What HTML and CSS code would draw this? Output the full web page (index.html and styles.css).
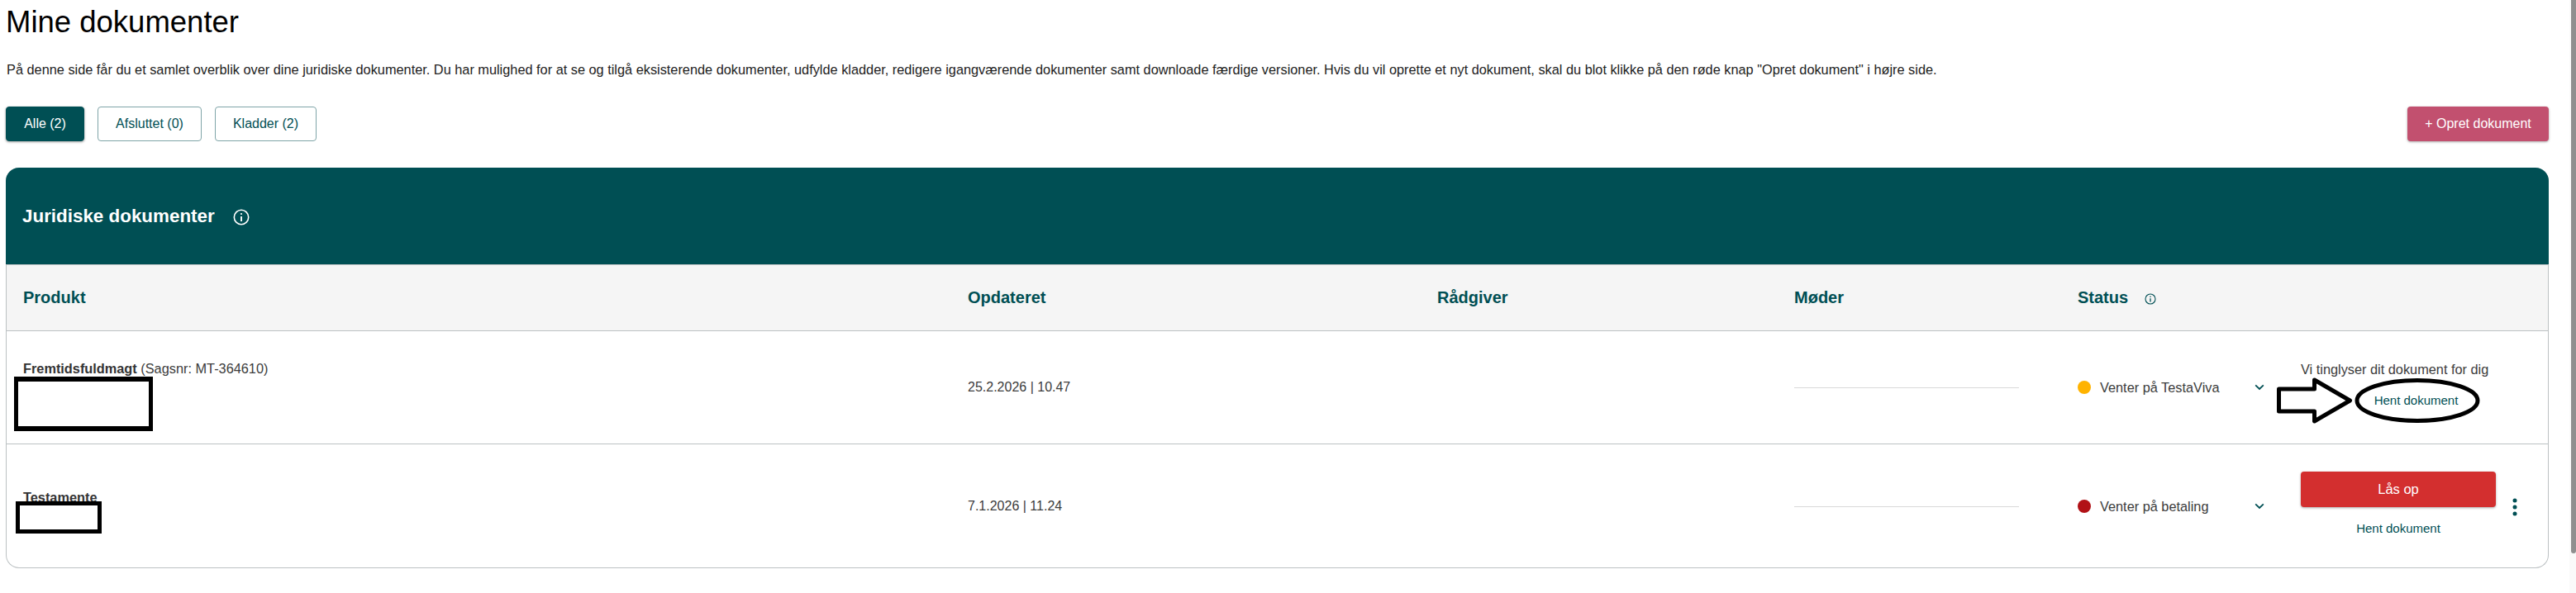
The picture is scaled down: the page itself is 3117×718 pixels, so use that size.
FILE: index.html
```html
<!DOCTYPE html>
<html lang="da">
<head>
    <meta charset="UTF-8">
    <meta name="viewport" content="width=device-width, initial-scale=1.0">
    <title>Mine dokumenter</title>
    <link rel="stylesheet" href="styles.css">
</head>
<body>
    <main class="page">
        <h1>Mine dokumenter</h1>
        <p class="intro">På denne side får du et samlet overblik over dine juridiske dokumenter. Du har mulighed for at se og tilgå eksisterende dokumenter, udfylde kladder, redigere igangværende dokumenter samt downloade færdige versioner. Hvis du vil oprette et nyt dokument, skal du blot klikke på den røde knap "Opret dokument" i højre side.</p>

        <div class="toolbar">
            <button class="filter filter-active">Alle (2)</button>
            <button class="filter filter-afsluttet">Afsluttet (0)</button>
            <button class="filter filter-kladder">Kladder (2)</button>
            <button class="create">+ Opret dokument</button>
        </div>

        <section class="panel">
            <div class="panel-head">
                <h2>Juridiske dokumenter</h2>
                <svg class="info-icon" viewBox="0 0 20 20" fill="none" stroke="currentColor" stroke-width="1.6">
                    <circle cx="10" cy="10" r="8.7"/>
                    <path d="M10 9v6" stroke-width="1.9"/>
                    <circle cx="10" cy="6" r="1.1" fill="currentColor" stroke="none"/>
                </svg>
            </div>

            <div class="row row-head">
                <div class="cell">Produkt</div>
                <div class="cell">Opdateret</div>
                <div class="cell">Rådgiver</div>
                <div class="cell">Møder</div>
                <div class="cell status-head">
                    Status
                    <svg class="info-small" viewBox="0 0 14 14" fill="none" stroke="currentColor" stroke-width="1.1">
                        <circle cx="7" cy="7" r="6"/>
                        <path d="M7 6.2v4.2" stroke-width="1.3"/>
                        <circle cx="7" cy="4.2" r=".8" fill="currentColor" stroke="none"/>
                    </svg>
                </div>
                <div class="cell"></div>
            </div>

            <div class="row row-first">
                <div class="cell product product-first">
                    <div><b>Fremtidsfuldmagt</b> (Sagsnr: MT-364610)</div>
                    <div class="redact redact-first"></div>
                </div>
                <div class="cell date">25.2.2026 | 10.47</div>
                <div class="cell"></div>
                <div class="cell"><div class="meeting-line"></div></div>
                <div class="cell status">
                    <span class="dot dot-yellow"></span>
                    <span class="status-text">Venter på TestaViva</span>
                    <svg class="chevron" viewBox="0 0 12 8" fill="none" stroke="currentColor" stroke-width="1.8"><path d="M1.2 1.4 6 6l4.8-4.6"/></svg>
                </div>
                <div class="cell action action-first">
                    <div class="action-note">Vi tinglyser dit dokument for dig</div>
                    <a class="link link-first">Hent dokument</a>
                    <!-- markering lagt oven paa skaermbilledet -->
                    <svg class="marking" viewBox="0 0 250 58" fill="none" stroke="#000" stroke-width="5">
                        <path d="M2.500 15h43V4l43 25-43 25V42h-43z" stroke-linejoin="round"/>
                        <ellipse cx="170" cy="29" rx="73" ry="24.500"/>
                    </svg>
                </div>
            </div>

            <div class="row row-last">
                <div class="cell product product-last">
                    <div><b>Testamente</b></div>
                    <div class="redact redact-last"></div>
                </div>
                <div class="cell date">7.1.2026 | 11.24</div>
                <div class="cell"></div>
                <div class="cell"><div class="meeting-line"></div></div>
                <div class="cell status">
                    <span class="dot dot-red"></span>
                    <span class="status-text">Venter på betaling</span>
                    <svg class="chevron" viewBox="0 0 12 8" fill="none" stroke="currentColor" stroke-width="1.8"><path d="M1.2 1.4 6 6l4.8-4.6"/></svg>
                </div>
                <div class="cell action action-last">
                    <div class="action-stack">
                        <button class="unlock">Lås op</button>
                        <a class="link">Hent dokument</a>
                    </div>
                    <svg class="kebab" viewBox="0 0 6 24" fill="currentColor">
                        <circle cx="3" cy="4" r="2.500"/>
                        <circle cx="3" cy="12" r="2.500"/>
                        <circle cx="3" cy="20" r="2.500"/>
                    </svg>
                </div>
            </div>
        </section>
    </main>
    <div class="scrollbar"><div class="scrollbar-thumb"></div></div>
</body>
</html>
```

FILE: styles.css
```css
* {
    box-sizing: border-box;
}
html, body {
    height: 718px;
    overflow: hidden;
}
body {
    margin: 0;
    display: flex;
    background-color: #fff;
    color: #3c3c3c;
    font-family: "Liberation Sans", Arial, sans-serif;
}
.page {
    width: 3077px;
    margin-left: 7px;
    flex-shrink: 0;
}
h1 {
    margin: 0;
    padding-top: 6px;
    height: 62px;
    font-size: 36.5px;
    line-height: 42px;
    font-weight: 400;
    color: #000;
}
.intro {
    margin: 0;
    height: 67px;
    padding-left: 1px;
    padding-top: 13px;
    font-size: 16.32px;
    line-height: 18px;
    color: #222;
    white-space: nowrap;
}
.toolbar {
    display: flex;
    height: 74px;
    align-items: flex-start;
}
button {
    font-family: inherit;
    cursor: pointer;
}
.filter {
    height: 42px;
    margin-right: 16px;
    border: 1px solid #7fa5a8;
    border-radius: 4px;
    background-color: #fff;
    color: #004f54;
    font-size: 16px;
}
.filter-active {
    width: 95px;
    background-color: #004f54;
    border-color: #004f54;
    color: #fff;
    box-shadow: 0 1px 3px rgba(0, 0, 0, 0.4);
}
.filter-afsluttet {
    width: 126px;
}
.filter-kladder {
    width: 123px;
}
.create {
    width: 171px;
    height: 42px;
    margin-left: auto;
    border: none;
    border-radius: 4px;
    background-color: #c2506f;
    color: #fff;
    font-size: 16px;
    box-shadow: 0 1px 3px rgba(0, 0, 0, 0.35);
}
.panel {
    width: 3077px;
    height: 485px;
    border: 1px solid #bcc1c3;
    border-top: none;
    border-radius: 16px;
}
.panel-head {
    display: flex;
    align-items: center;
    height: 117px;
    margin: 0 -1px;
    padding-left: 20px;
    border-radius: 16px 16px 0 0;
    background-color: #004f54;
    color: #fff;
}
.panel-head h2 {
    margin: 0;
    font-size: 22.4px;
    font-weight: 700;
}
.info-icon {
    width: 20px;
    height: 20px;
    margin-left: 22px;
    margin-top: 3px;
}
.row {
    display: grid;
    grid-template-columns: 1143px 568px 432px 343px 270px 1fr;
    align-items: center;
    border-bottom: 1px solid #bcc1c3;
    font-size: 16.32px;
}
.row-head {
    height: 81px;
    padding-left: 20px;
    background-color: #f5f5f5;
    border-top: 1px solid #c2c6c8;
    color: #004f54;
    font-size: 20px;
    font-weight: 700;
}
.row-first {
    height: 137px;
    padding-left: 20px;
}
.row-last {
    height: 150px;
    padding-left: 20px;
    border-bottom: none;
}
.date {
    font-size: 16px;
}
.status-head {
    display: flex;
    align-items: center;
}
.info-small {
    width: 14px;
    height: 14px;
    margin-left: 20px;
    margin-top: 2px;
}
.product {
    position: relative;
    align-self: stretch;
}
.product-first {
    padding-top: 36px;
}
.product-last {
    padding-top: 55px;
}
.product b {
    color: #333;
}
.redact {
    position: absolute;
    border: solid #000;
    background-color: #fff;
}
.redact-first {
    left: -11px;
    top: 55px;
    width: 168px;
    height: 66px;
    border-width: 6px 5px;
}
.redact-last {
    left: -9px;
    top: 69px;
    width: 104px;
    height: 39px;
    border-width: 5px;
}
.meeting-line {
    width: 272px;
    height: 1px;
    background-color: #d9d9d9;
}
.status {
    display: flex;
    align-items: center;
}
.dot {
    width: 16px;
    height: 16px;
    border-radius: 50%;
    flex-shrink: 0;
}
.dot-yellow {
    background-color: #ffb300;
}
.dot-red {
    background-color: #b11116;
}
.status-text {
    width: 187px;
    margin-left: 11px;
}
.chevron {
    width: 12px;
    height: 8px;
    color: #004f54;
}
.action {
    position: relative;
    color: #3c3c3c;
}
.action-first {
    align-self: stretch;
    padding-top: 37px;
}
.action-note {
    white-space: nowrap;
}
.link {
    display: block;
    width: 236px;
    color: #004f54;
    font-size: 15px;
    text-align: center;
}
.link-first {
    width: 281px;
    margin-top: 19px;
    margin-left: -1px;
}
.marking {
    position: absolute;
    left: -29px;
    top: 55px;
    width: 250px;
    height: 58px;
}
.action-last {
    display: flex;
    align-items: center;
}
.action-stack {
    margin-top: -8px;
}
.unlock {
    display: block;
    width: 236px;
    height: 43px;
    border: none;
    border-radius: 4px;
    background-color: #d32f2f;
    color: #fff;
    font-size: 16.5px;
    box-shadow: 0 1px 3px rgba(0, 0, 0, 0.35);
}
.action-stack .link {
    margin-top: 17px;
}
.kebab {
    width: 6px;
    height: 24px;
    margin-left: 20px;
    margin-top: 2px;
    color: #004f54;
}
.scrollbar {
    width: 8px;
    margin-left: 25px;
    padding-left: 2px;
    background-color: #fafafa;
    flex-shrink: 0;
}
.scrollbar-thumb {
    height: 670px;
    background-color: #8f8f8f;
    border-radius: 0 0 3px 3px;
}
```
